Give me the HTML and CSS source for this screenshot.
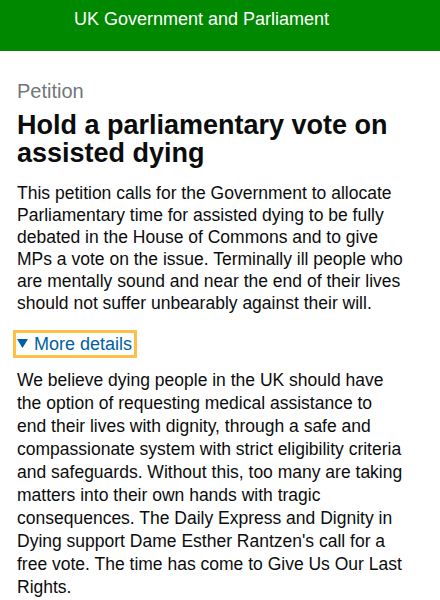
FILE: index.html
```html
<!DOCTYPE html>
<html lang="en">
<head>
  <meta charset="UTF-8">
  <meta name="viewport" content="width=device-width, initial-scale=1.0">
  <title>Petition</title>
  <link rel="stylesheet" href="styles.css">
</head>
<body>
  <header class="site-header">
    <span class="site-title">UK Government and Parliament</span>
  </header>

  <main class="content">
    <span class="caption">Petition</span>
    <h1 class="petition-title">Hold a parliamentary vote on assisted dying</h1>
    <p class="lede">This petition calls for the Government to allocate<br>
      Parliamentary time for assisted dying to be fully<br>
      debated in the House of Commons and to give<br>
      MPs a vote on the issue. Terminally ill people who<br>
      are mentally sound and near the end of their lives<br>
      should not suffer unbearably against their will.</p>

    <details class="more" open>
      <summary class="more-toggle">
        <svg class="arrow" width="11" height="9" viewBox="0 0 11 9"><path d="M0 0h11L5.5 9z" fill="#005ea5"/></svg>
        More details
      </summary>
      <p class="more-text">We believe dying people in the UK should have<br>
        the option of requesting medical assistance to<br>
        end their lives with dignity, through a safe and<br>
        compassionate system with strict eligibility criteria<br>
        and safeguards. Without this, too many are taking<br>
        matters into their own hands with tragic<br>
        consequences. The Daily Express and Dignity in<br>
        Dying support Dame Esther Rantzen's call for a<br>
        free vote. The time has come to Give Us Our Last<br>
        Rights.</p>
    </details>
  </main>
</body>
</html>
```

FILE: styles.css
```css
* {
  box-sizing: border-box;
  margin: 0;
  padding: 0;
}

body {
  font-family: 'Liberation Sans', Arial, sans-serif;
  color: #0b0c0c;
  background: #fff;
}

.site-header {
  background: #008800;
  height: 51px;
  padding: 8px 0 0 74px;
}

.site-title {
  color: #fff;
  font-size: 18px;
  line-height: 22px;
}

.content {
  padding: 0 6px 0 17px;
}

.caption {
  display: block;
  color: #6f777b;
  font-size: 20px;
  line-height: 24px;
  margin-top: 28px;
}

.petition-title {
  font-size: 27px;
  font-weight: bold;
  line-height: 28px;
  margin-top: 8px;
}

.lede {
  font-size: 17.5px;
  line-height: 22px;
  margin-top: 15px;
}

.more {
  margin-top: 19px;
}

.more-toggle {
  display: flex;
  align-items: center;
  gap: 6px;
  width: fit-content;
  list-style: none;
  color: #005ea5;
  font-size: 18px;
  line-height: 22px;
  padding: 0 2px 0 1px;
  margin-left: -1px;
  outline: 3px solid #ffbf47;
  cursor: pointer;
}

.more-toggle::-webkit-details-marker {
  display: none;
}

.arrow {
  margin-top: -2px;
}

.more-text {
  font-size: 17.5px;
  line-height: 23px;
  margin-top: 14px;
}
```
